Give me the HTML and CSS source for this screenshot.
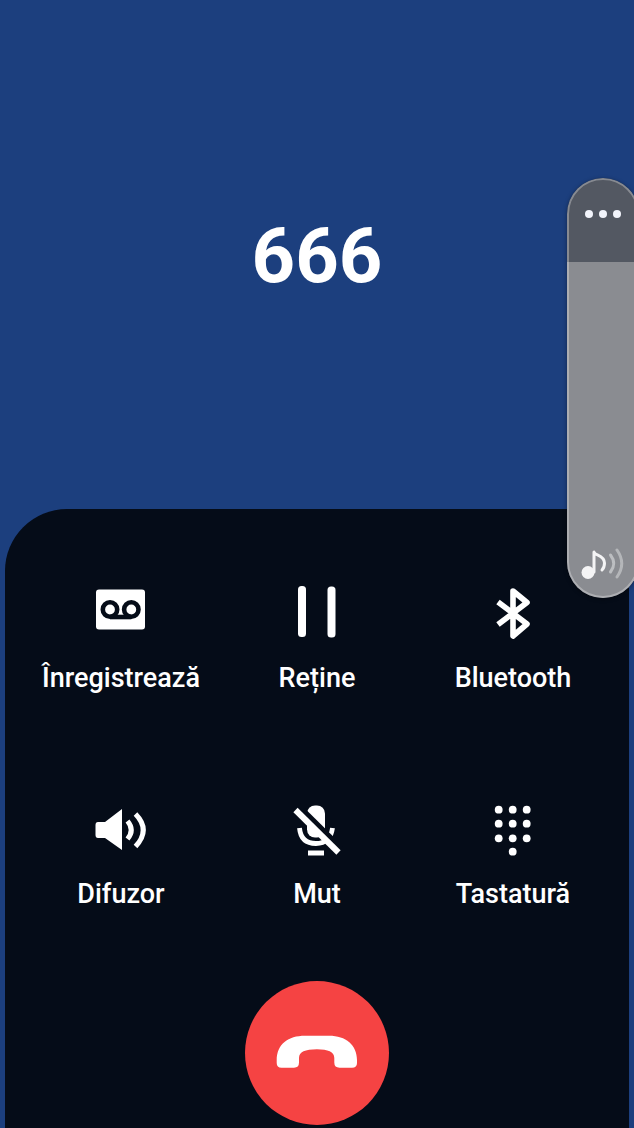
FILE: index.html
```html
<!DOCTYPE html>
<html lang="ro">
<head>
<meta charset="utf-8">
<meta name="viewport" content="width=device-width, initial-scale=1">
<title>Apel</title>
<link rel="stylesheet" href="styles.css">
</head>
<body>
<main class="call">
  <header class="caller"><h1 class="number">666</h1></header>
  <section class="panel">
    <div class="actions">
      <button class="action" type="button">
        <svg class="icon" viewBox="0 0 56 60" aria-hidden="true">
          <rect x="3" y="7.5" width="49" height="40" rx="3" fill="currentColor"/>
          <g fill="none" stroke="#050c18" stroke-width="4.6"><circle cx="17" cy="27.500" r="7.200"/><circle cx="38.300" cy="27.500" r="7.200"/><path d="M17 35H38.300"/></g>
        </svg>
        <span class="label">Înregistrează</span>
      </button>
      <button class="action" type="button">
        <svg class="icon" viewBox="0 0 56 60" aria-hidden="true" fill="currentColor">
          <rect x="9" y="4" width="8" height="51" rx="3.500"/><rect x="38.500" y="4.500" width="8" height="51" rx="3.500"/>
        </svg>
        <span class="label">Reține</span>
      </button>
      <button class="action" type="button">
        <svg class="icon" viewBox="0 0 56 60" aria-hidden="true">
          <path d="M13 20L42 42L28 54V9L42 20.500L13 42.500" fill="none" stroke="currentColor" stroke-width="5.600" stroke-linejoin="round"/>
        </svg>
        <span class="label">Bluetooth</span>
      </button>
      <button class="action" type="button">
        <svg class="icon" viewBox="0 0 56 60" aria-hidden="true">
          <path d="M5 24H12L29 11V52L12 40H5Q2.500 40 2.500 37V27Q2.500 24 5 24Z" fill="currentColor"/>
          <path d="M34.500 23Q42 32 34.500 41M42.500 16Q58 32 42.500 48.500" fill="none" stroke="currentColor" stroke-width="5"/>
        </svg>
        <span class="label">Difuzor</span>
      </button>
      <button class="action" type="button">
        <svg class="icon" viewBox="0 0 56 60" aria-hidden="true">
          <rect x="18" y="7.500" width="18" height="32" rx="8" fill="currentColor"/>
          <path d="M10.500 30C11.500 41 18 45.500 27 45.500S42 41 43.500 30" fill="none" stroke="currentColor" stroke-width="4.800"/>
          <path d="M9 8L52 50.500" stroke="#050c18" stroke-width="6"/>
          <path d="M6.500 12L49.500 54.500" stroke="currentColor" stroke-width="6"/>
          <path d="M19 55H35" stroke="currentColor" stroke-width="5"/>
        </svg>
        <span class="label">Mut</span>
      </button>
      <button class="action" type="button">
        <svg class="icon" viewBox="0 0 56 60" aria-hidden="true" fill="currentColor">
          <circle cx="13.700" cy="11.700" r="3.900"/><circle cx="27.700" cy="11.700" r="3.900"/><circle cx="41.700" cy="11.700" r="3.900"/>
          <circle cx="13.700" cy="25.700" r="3.900"/><circle cx="27.700" cy="25.700" r="3.900"/><circle cx="41.700" cy="25.700" r="3.900"/>
          <circle cx="13.700" cy="40.300" r="3.900"/><circle cx="27.700" cy="40.300" r="3.900"/><circle cx="41.700" cy="40.300" r="3.900"/>
          <circle cx="27.700" cy="53.700" r="3.900"/>
        </svg>
        <span class="label">Tastatură</span>
      </button>
    </div>
    <button class="hangup" type="button" aria-label="Încheie apelul">
      <svg class="hangup-icon" viewBox="0 0 144 144" aria-hidden="true">
        <path d="M31.700 82V79C32 63 43 54.700 60 54.700H84C101 54.700 112 64 112 79V82Q112 86.700 107 86.700H94.500Q89.300 86.700 89.300 81.500V77C89.300 71 83 68.300 72 68.300C60 68.300 54 71 54 77V81.500Q54 86.700 49 86.700H36.500Q31.700 86.700 31.700 82Z" fill="#fff"/>
      </svg>
    </button>
  </section>
  <aside class="volume">
    <button class="more" type="button" aria-label="Mai multe">
      <svg class="dots" viewBox="0 0 36 8" aria-hidden="true" fill="#f2f4fb"><circle cx="4" cy="4" r="4"/><circle cx="18" cy="4" r="4"/><circle cx="32" cy="4" r="4"/></svg>
    </button>
    <input class="slider" type="range" min="0" max="100" value="80" aria-label="Volum media">
    <svg class="note" viewBox="0 0 44 36" aria-hidden="true" fill="none" stroke-linecap="round" stroke-linejoin="round">
      <circle cx="7" cy="25.500" r="6.500" fill="#f4f4f5"/>
      <path d="M13 25V5C14 9 23 7.500 23.500 16Q23.500 20.500 21 23" stroke="#f4f4f5" stroke-width="3"/>
      <path d="M29.500 8Q36 16.500 29.500 25" stroke="#bcbec1" stroke-width="3"/>
      <path d="M36 3Q45.500 16.500 36 30" stroke="#b4b6b9" stroke-width="3"/>
    </svg>
  </aside>
</main>
</body>
</html>
```

FILE: styles.css
```css
* { box-sizing: border-box; }

body {
  margin: 0;
  background: #1c3f7e;
  color: #fff;
  font-family: Roboto, "Noto Sans", sans-serif;
}

button {
  margin: 0;
  padding: 0;
  border: 0;
  background: none;
  color: inherit;
  font: inherit;
  cursor: pointer;
}

.call {
  position: relative;
  display: flex;
  flex-direction: column;
  min-height: 100vh;
  overflow: hidden;
}

.caller {
  display: flex;
  justify-content: center;
  padding: 206px 0 203px;
}

.number {
  margin: 0;
  font-size: 76px;
  font-weight: 700;
  line-height: 100px;
}

.panel {
  flex: 1;
  display: flex;
  flex-direction: column;
  align-items: center;
  gap: 71px;
  margin: 0 5px;
  padding: 73px 18px 3px;
  border-radius: 62px 62px 0 0;
  background: #050c18;
}

.actions {
  align-self: stretch;
  display: grid;
  grid-template-columns: repeat(3, 1fr);
  row-gap: 104px;
}

.action {
  display: flex;
  flex-direction: column;
  align-items: center;
  gap: 20px;
}

.icon {
  width: 56px;
  height: 60px;
}

.label {
  font-size: 27px;
  font-weight: 500;
  line-height: 32px;
}

.hangup {
  width: 144px;
  height: 144px;
  border-radius: 50%;
  background: #f54343;
}

.hangup-icon {
  display: block;
}

.volume {
  position: absolute;
  top: 178px;
  right: -5px;
  display: flex;
  flex-direction: column;
  width: 72px;
  height: 420px;
  overflow: hidden;
  border-radius: 36px;
  background: #535862;
  box-shadow: 0 1px 4px #0006;
}

.volume::after {
  content: "";
  position: absolute;
  inset: 0;
  border: 2px solid #ffffff4d;
  border-radius: inherit;
  pointer-events: none;
}

.more {
  height: 84px;
  padding-bottom: 16px;
}

.dots {
  width: 36px;
  height: 8px;
}

.slider {
  flex: 1;
  width: 100%;
  min-height: 0;
  margin: 0;
  appearance: none;
  background: #8a8c91;
  writing-mode: vertical-lr;
  direction: rtl;
}

.slider::-webkit-slider-thumb {
  appearance: none;
  width: 1px;
  height: 1px;
}

.note {
  position: absolute;
  left: 14px;
  bottom: 15px;
  width: 44px;
  height: 36px;
  pointer-events: none;
}
```
